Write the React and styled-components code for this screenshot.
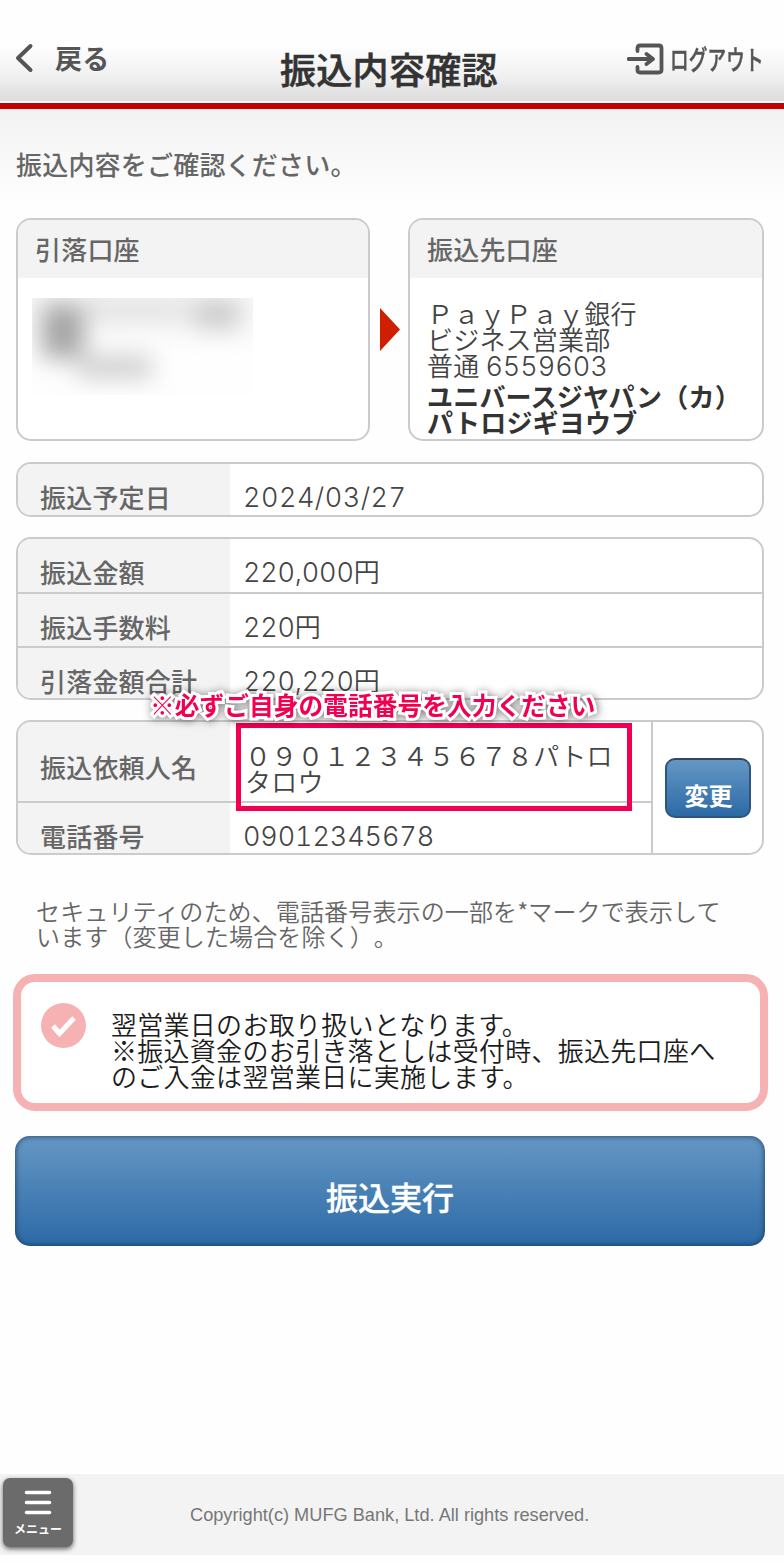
import styled, { createGlobalStyle } from "styled-components";

const GlobalStyle = createGlobalStyle`
  * {
    box-sizing: border-box;
  }
  body {
    margin: 0;
    background: #fefefe;
    color: #444;
    font-family: "Noto Sans CJK JP", sans-serif;
    font-size: 26px;
    line-height: 26px;
    letter-spacing: 0.2px;
    text-spacing-trim: space-all;
  }
  svg {
    flex-shrink: 0;
  }
`;

const line = "#cbcbcb";

const Container = styled.div`
  display: flex;
  flex-direction: column;
  width: 784px;
  height: 1563px;
  overflow: hidden;
`;

const Header = styled.header`
  display: grid;
  grid-template-columns: 265px 1fr 265px;
  height: 109px;
  padding-top: 40px;
  background: linear-gradient(#fefefe 45px, #f1f1f1 75px, #dcdcdc 101px, #fff 101px);
  border-bottom: 6px solid #c40000;
  color: #555;
`;

const Back = styled.a`
  display: flex;
  align-items: center;
  gap: 21px;
  height: 36px;
  padding-left: 15px;
  font-size: 27px;
  font-weight: 700;
`;

const Title = styled.h1`
  margin: 0;
  padding-left: 15px;
  font-size: 36px;
  line-height: 56px;
  font-weight: 500;
  letter-spacing: 0.3px;
  white-space: nowrap;
  color: #333;
  -webkit-text-stroke: 0.6px #333;
`;

const Logout = styled.a`
  display: flex;
  align-items: center;
  height: 38px;
  padding-left: 108px;
`;

const LogoutText = styled.span`
  width: 95px;
  margin-left: 6px;
  font-size: 27px;
  font-weight: 500;
  white-space: nowrap;
  transform: scaleX(0.69);
  transform-origin: left;
  -webkit-text-stroke: 0.5px #555;
`;

const Main = styled.main`
  flex: 1;
  padding: 42px 20px 0 16px;
  background: linear-gradient(#f2f2f2, #fefefe 95px);
`;

const Lead = styled.p`
  margin: 0 0 41px;
  font-weight: 500;
  color: #666;
`;

const Accounts = styled.div`
  display: grid;
  grid-template-columns: 354px 38px 356px;
  height: 223px;
  margin-bottom: 21px;
`;

const Card = styled.section`
  border: 2px solid ${line};
  border-radius: 15px;
  background: #fff;
  overflow: hidden;
`;

const CardTitle = styled.h2`
  margin: 0;
  height: 58px;
  padding: 16px 17px 0;
  background: #f3f3f3;
  color: #666;
  font-size: 26px;
  font-weight: 500;
`;

const CardBody = styled.div`
  padding: ${(props) => (props.$masked ? "20px 14px" : "22px 17px")};
  font-weight: 350;
  white-space: nowrap;
`;

const Payee = styled.div`
  margin-top: 3px;
  font-weight: 700;
  color: #333;
`;

const Mask = styled.svg`
  display: block;
  background: linear-gradient(#f8f8f8, #fefefe 60%);
`;

const Arrow = styled.svg`
  margin: 90px 0 0 10px;
`;

const Panel = styled.section`
  display: flex;
  width: 748px;
  margin-bottom: 20px;
  border: 2px solid ${line};
  border-radius: 15px;
  background: #fff;
  overflow: hidden;
`;

const Rows = styled.dl`
  flex: 1;
  margin: 0;
`;

const Row = styled.div`
  display: flex;
  height: ${(props) => props.$height}px;

  & + & {
    border-top: 2px solid ${line};
  }
`;

const Label = styled.dt`
  width: 212px;
  padding: ${(props) => props.$top || 20}px 0 0 22px;
  background: #f3f3f3;
  color: #666;
  font-weight: 500;
  white-space: nowrap;
`;

const Value = styled.dd`
  margin: 0;
  padding: 21px 0 0 13px;
  font-family: "Inter", "Noto Sans CJK JP", sans-serif;
  font-feature-settings: "tnum";
  font-size: 27px;
  font-weight: 330;
  letter-spacing: ${(props) => props.$spacing}px;
  white-space: nowrap;
`;

const Unit = styled.span`
  font-family: "Noto Sans CJK JP", sans-serif;
  font-size: 26px;
  font-weight: 350;
  line-height: 1px;
`;

const Digits = styled.span`
  font-family: "Inter", "Noto Sans CJK JP", sans-serif;
  font-feature-settings: "tnum";
  font-size: 27px;
  font-weight: 330;
  letter-spacing: 0;
`;

const Remitter = styled.dd`
  position: relative;
  margin: 0;
  padding: 20px 0 0 15px;
  font-weight: 350;
  white-space: nowrap;
`;

const Highlight = styled.div`
  position: absolute;
  top: 1px;
  left: 6px;
  width: 396px;
  height: 88px;
  border: 5px solid #f2004f;
`;

const Caution = styled.div`
  position: absolute;
  top: -31px;
  left: -80px;
  font-size: 24.6px;
  font-weight: 700;
  letter-spacing: 0.15px;
  color: #f2004f;
  -webkit-text-stroke: 6px #fff;
  paint-order: stroke fill;
  filter: drop-shadow(1px 1px 4px rgba(0, 0, 0, 0.5));
`;

const PayerPanel = styled(Panel)`
  overflow: visible;

  ${Row}:first-child ${Label} {
    border-top-left-radius: 13px;
  }
  ${Row}:last-child ${Label} {
    border-bottom-left-radius: 13px;
  }
`;

const Action = styled.div`
  display: flex;
  align-items: center;
  justify-content: center;
  width: 111px;
  border-left: 2px solid ${line};
`;

const Button = styled.button`
  display: block;
  border: 0;
  padding: 0;
  font-family: inherit;
  color: #fff;
  background: linear-gradient(#6597c4, #2c6aa6);
`;

const ChangeButton = styled(Button)`
  width: 86px;
  height: 60px;
  padding: 14px 0 0 2px;
  border: 2px solid #2d5580;
  border-top-color: #31475d;
  border-radius: 10px;
  font-size: 24px;
  line-height: 26px;
  font-weight: 700;
`;

const SubmitButton = styled(Button)`
  width: 750px;
  height: 110px;
  margin-left: -1px;
  padding-top: 10px;
  border-radius: 15px;
  font-size: 32px;
  line-height: 36px;
  font-weight: 500;
  box-shadow: inset 0 0 5px 1px rgba(20, 45, 75, 0.65);
  -webkit-text-stroke: 0.4px #fff;
`;

const Note = styled.p`
  margin: 43px 0 26px 20px;
  font-size: 24px;
  line-height: 25px;
  letter-spacing: 0.13px;
  font-weight: 350;
  white-space: nowrap;
  color: #666;
`;

const Notice = styled.div`
  display: flex;
  gap: 25px;
  width: 755px;
  height: 137px;
  margin: 0 0 25px -3px;
  padding: 21px 20px;
  border: 8px solid #f6b2b3;
  border-radius: 22px;
  background: #fff;
`;

const NoticeText = styled.p`
  margin: 8px 0 0;
  font-weight: 350;
  line-height: 26.2px;
  letter-spacing: 0.28px;
  white-space: nowrap;
  color: #1c1c1c;
`;

const Footer = styled.footer`
  display: flex;
  height: 81px;
  margin-bottom: 8px;
  padding: 4px 3px;
  background: #f3f3f3;
`;

const MenuButton = styled.button`
  display: flex;
  flex-direction: column;
  align-items: center;
  width: 70px;
  height: 69px;
  padding: 12px 0 0;
  border: 0;
  border-radius: 7px;
  background: #6b6b6b;
  box-shadow: 0 2px 5px rgba(0, 0, 0, 0.6);
  color: #fff;
  font-family: inherit;
  font-size: 12px;
  line-height: 16px;
  font-weight: 700;
`;

const MenuText = styled.span`
  margin-top: 6px;
`;

const Copyright = styled.small`
  padding: 24px 0 0 117px;
  font-family: "Liberation Sans", Arial, sans-serif;
  font-size: 18.2px;
  line-height: 26px;
  letter-spacing: 0;
  color: #777;
`;

const amounts = [
  { label: "振込金額", value: "220,000", height: 53 },
  { label: "振込手数料", value: "220", height: 54 },
  { label: "引落金額合計", value: "220,220", height: 52 },
];

const App = () => {
  return (
    <>
      <GlobalStyle />
      <Container>
        <Header>
          <Back>
            <svg width="19" height="30" viewBox="0 0 19 30" fill="none" stroke="#555" strokeWidth="4" strokeLinecap="round" strokeLinejoin="round">
              <path d="M15.5 3L3 15L15.5 27" />
            </svg>
            戻る
          </Back>
          <Title>振込内容確認</Title>
          <Logout>
            <svg width="37" height="32" viewBox="0 0 37 32" fill="none" stroke="#555" strokeWidth="3.8" strokeLinecap="round" strokeLinejoin="round">
              <path d="M10.5 8V5Q10.5 2.5 13 2.5H31.5Q34.5 2.5 34.5 5V27Q34.5 29.5 31.5 29.5H13Q10.5 29.5 10.5 27V24" />
              <path d="M1.5 16H25M19.5 11L26 16L19.5 21" />
            </svg>
            <LogoutText>ログアウト</LogoutText>
          </Logout>
        </Header>

        <Main>
          <Lead>振込内容をご確認ください。</Lead>

          <Accounts>
            <Card>
              <CardTitle>引落口座</CardTitle>
              <CardBody $masked>
                <Mask width="221" height="97" viewBox="0 0 221 97">
                  <defs>
                    <filter id="soften" x="-50%" y="-100%" width="200%" height="300%">
                      <feGaussianBlur stdDeviation="12" />
                    </filter>
                  </defs>
                  <g filter="url(#soften)">
                    <rect x="10" y="6" width="42" height="54" fill="#a4a4a4" />
                    <rect x="52" y="0" width="106" height="24" fill="#e2e2e2" />
                    <rect x="162" y="2" width="46" height="28" fill="#c8c8c8" />
                    <rect x="46" y="58" width="74" height="22" fill="#cbcbcb" />
                  </g>
                </Mask>
              </CardBody>
            </Card>
            <Arrow width="20" height="43" viewBox="0 0 20 43">
              <path d="M0 0L20 21.5L0 43Z" fill="#cf1e00" />
            </Arrow>
            <Card>
              <CardTitle>振込先口座</CardTitle>
              <CardBody>
                <div>ＰａｙＰａｙ銀行</div>
                <div>ビジネス営業部</div>
                <div>普通 <Digits>6559603</Digits></div>
                <Payee>
                  ユニバースジヤパン（カ）
                  <br />
                  パトロジギヨウブ
                </Payee>
              </CardBody>
            </Card>
          </Accounts>

          <Panel>
            <Rows>
              <Row $height={51}>
                <Label>振込予定日</Label>
                <Value $spacing={0.5}>2024/03/27</Value>
              </Row>
            </Rows>
          </Panel>

          <Panel>
            <Rows>
              {amounts.map((item) => (
                <Row key={item.label} $height={item.height}>
                  <Label>{item.label}</Label>
                  <Value $spacing={-0.2}>
                    {item.value}
                    <Unit>円</Unit>
                  </Value>
                </Row>
              ))}
            </Rows>
          </Panel>

          <PayerPanel>
            <Rows>
              <Row $height={79}>
                <Label $top={32}>振込依頼人名</Label>
                <Remitter>
                  ０９０１２３４５６７８パトロ
                  <br />
                  タロウ
                  <Highlight />
                  <Caution>※必ずご自身の電話番号を入力ください</Caution>
                </Remitter>
              </Row>
              <Row $height={52}>
                <Label>電話番号</Label>
                <Value $spacing={-0.1}>09012345678</Value>
              </Row>
            </Rows>
            <Action>
              <ChangeButton>変更</ChangeButton>
            </Action>
          </PayerPanel>

          <Note>
            セキュリティのため、電話番号表示の一部を*マークで表示して
            <br />
            います（変更した場合を除く）。
          </Note>

          <Notice>
            <svg width="45" height="45" viewBox="0 0 45 45">
              <circle cx="22.5" cy="22.5" r="22.5" fill="#f6b2b3" />
              <path d="M12 23L18.5 30.5L33 15" fill="none" stroke="#fff" strokeWidth="5" />
            </svg>
            <NoticeText>
              翌営業日のお取り扱いとなります。
              <br />
              ※振込資金のお引き落としは受付時、振込先口座へ
              <br />
              のご入金は翌営業日に実施します。
            </NoticeText>
          </Notice>

          <SubmitButton>振込実行</SubmitButton>
        </Main>

        <Footer>
          <MenuButton>
            <svg width="28" height="25" viewBox="0 0 28 25" stroke="#fff" strokeWidth="3.6" strokeLinecap="round">
              <path d="M2.5 2.5H25.5M2.5 12.5H25.5M2.5 22.5H25.5" />
            </svg>
            <MenuText>メニュー</MenuText>
          </MenuButton>
          <Copyright>Copyright(c) MUFG Bank, Ltd. All rights reserved.</Copyright>
        </Footer>
      </Container>
    </>
  );
};

export default App;
